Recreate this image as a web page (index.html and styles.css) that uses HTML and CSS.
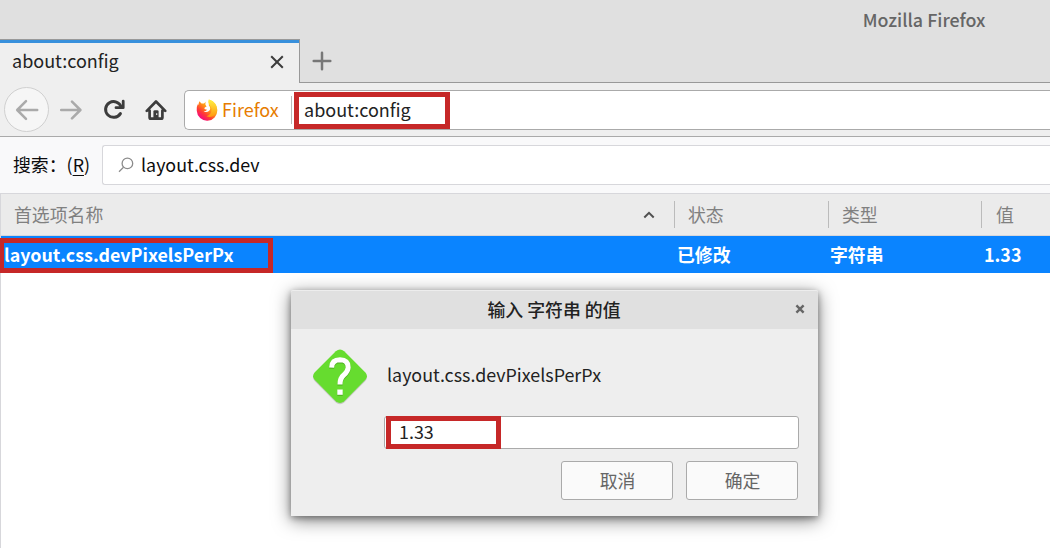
FILE: index.html
```html
<!DOCTYPE html>
<html lang="zh-CN">
<head>
<meta charset="utf-8">
<title>Mozilla Firefox</title>
<link rel="stylesheet" href="styles.css">
</head>
<body>
<div class="window">
  <header class="titlebar">Mozilla Firefox</header>
  <div class="tabstrip">
    <div class="tab">
      <span>about:config</span>
      <svg class="tab-close" width="14" height="14" viewBox="0 0 14 14"><path d="M1.2 1.2 12.8 12.8M12.8 1.2 1.2 12.8"/></svg>
    </div>
    <div class="tab-rest">
      <svg class="new-tab" width="20" height="20" viewBox="0 0 20 20"><path d="M10 1.7V18.3M1.7 10H18.3"/></svg>
    </div>
  </div>
  <nav class="toolbar">
    <span class="back"><svg class="arrow" width="24" height="22" viewBox="0 0 24 22"><path d="M22.2 11H2.5M11 2.2 2.2 11 11 19.8"/></svg></span>
    <svg class="arrow forward" width="22" height="22" viewBox="0 0 22 22"><path d="M1.2 11H20M12 2.6 20.4 11 12 19.4"/></svg>
    <svg class="reload" width="22" height="22" viewBox="0 0 22 22"><path class="ring" d="M18.2 8A8 7.9 0 1 0 17.4 14.6"/><path class="head" d="M20.2 2.2V8.7H13"/></svg>
    <svg class="home" width="22" height="22" viewBox="0 0 22 22"><path class="line" d="M1.8 11.9 11 2.5 20.2 11.9M4.6 11.5V18.4Q4.6 19.6 5.8 19.6H16.2Q17.4 19.6 17.4 18.4V11.5"/><path class="door" d="M8.4 20V12.6Q8.4 11.2 9.8 11.2H12.2Q13.6 11.2 13.6 12.6V20Z"/><path class="knob" d="M11.7 14.2V16"/></svg>
    <div class="urlbar">
      <svg class="fox" width="22" height="22" viewBox="0 0 22 22">
        <defs>
          <linearGradient id="body" x1=".85" y1=".1" x2=".2" y2=".95"><stop offset="0" stop-color="#ffe226"/><stop offset=".4" stop-color="#ff9a16"/><stop offset=".7" stop-color="#ff3b35"/><stop offset="1" stop-color="#f5008c"/></linearGradient>
          <linearGradient id="tail" x1="0" y1="0" x2="0" y2="1"><stop offset="0" stop-color="#fff044"/><stop offset="1" stop-color="#ff980e"/></linearGradient>
        </defs>
        <path fill="url(#body)" d="M3.3 2.2 5.5 4.6 8 4.4 9.8 2.8V5.2L12 7.2 14 3 12.8.6Q17 1.5 19 4.5 21.4 7.2 21.3 11A10.2 10.2 0 0 1 .8 12Q.5 7.8 1.7 5.2L2.3 6Z"/>
        <path fill="#fff" d="M9.8 2.6Q10.8 4.6 12.4 5.8 15.6 9.2 13.2 11.8 10.8 14.1 7.6 12.4 10.3 12.3 11 10.8L8.4 10Q8 8.6 10.6 7.6L9.4 5.8Z"/>
        <path fill="url(#tail)" d="M12.8.6Q17.5 2 19.4 5.1 22.5 11 18.6 16.2 15 19 10.5 17.3 16.3 15.4 15.5 9.4 14.4 6.8 12.6 4.4 11.8 2.5 12.8.6Z"/>
      </svg>
      <span class="brand">Firefox</span>
      <span class="url">about:config</span>
    </div>
  </nav>
  <section class="filter">
    <label class="filter-label">搜索：(<u>R</u>)</label>
    <div class="filter-box">
      <svg class="glass" width="16" height="16" viewBox="0 0 16 16"><circle cx="9.4" cy="6.4" r="5.3"/><path d="M5.5 10.3 1 14.8"/></svg>
      <span class="filter-text">layout.css.dev</span>
    </div>
  </section>
  <main class="table">
    <div class="row head-row">
      <div class="cell">首选项名称<svg class="sort" width="12" height="8" viewBox="0 0 12 8"><path d="M1.3 6.5 6 1.8 10.7 6.5"/></svg></div>
      <div class="cell">状态</div>
      <div class="cell">类型</div>
      <div class="cell">值</div>
    </div>
    <div class="row data-row">
      <div class="item name">layout.css.devPixelsPerPx</div>
      <div class="item">已修改</div>
      <div class="item">字符串</div>
      <div class="item">1.33</div>
    </div>
  </main>
  <div class="dialog">
    <div class="dialog-title">输入 字符串 的值<svg class="dialog-close" width="10" height="10" viewBox="0 0 10 10"><path d="M1.4 1.4 8.6 8.6M8.6 1.4 1.4 8.6"/></svg></div>
    <div class="dialog-body">
      <svg class="question" width="56" height="58" viewBox="0 0 56 58">
        <path class="shade" d="M23.8 4.2Q28 .8 32.2 4.2L53.4 25.8Q56.4 29.4 53.4 33L32.2 54.6Q28 58 23.8 54.6L2.6 33Q-.4 29.4 2.6 25.8Z"/>
        <path class="diamond" d="M23.8 3.2Q28-.2 32.2 3.2L53.4 24.6Q56.4 28.2 53.4 31.8L32.2 53.2Q28 56.6 23.8 53.2L2.6 31.8Q-.4 28.2 2.6 24.6Z"/>
        <g class="hook-shade"><path class="hook" d="M19.6 20.6Q19.8 12.9 28 12.8 36.2 13 36.2 20.4 36 24.4 32 27.8 28 31 28 37.4"/><path class="dot" d="M25.3 42.5H30.7V47.8H25.3Z"/></g>
        <path class="hook" d="M19.6 19.6Q19.8 11.9 28 11.8 36.2 12 36.2 19.4 36 23.4 32 26.8 28 30 28 36.4"/><path class="dot" d="M25.3 41.5H30.7V46.8H25.3Z"/>
      </svg>
      <div class="prompt">layout.css.devPixelsPerPx</div>
      <div class="value"><span class="value-text">1.33</span></div>
      <div class="buttons"><button class="button">取消</button><button class="button">确定</button></div>
    </div>
  </div>
</div>
</body>
</html>
```

FILE: styles.css
```css
* { box-sizing: border-box; }
body { margin: 0; font: 17.87px/26px "Noto Sans CJK SC", "Noto Sans", sans-serif; color: #222; }
svg { display: block; flex: none; fill: none; }
.window { position: relative; width: 1050px; height: 548px; overflow: hidden; background: #fff; display: flex; flex-direction: column; }
.titlebar { height: 39px; flex: none; background: #e0e0e0; padding: 6px 64.5px 0 0; text-align: right; font-weight: 500; color: #666; }
.tabstrip { height: 44px; flex: none; display: flex; background: #e0e0e0; font-size: 18px; }
.tab { width: 300px; border-top: 1px solid #999; border-right: 1px solid #999; background: #efefef; box-shadow: inset 0 3px #3890dc; display: flex; justify-content: space-between; padding: 7px 15.5px 0 12px; }
.tab-close { margin-top: 7.5px; stroke: #3c3c3c; stroke-width: 2; }
.tab-rest { flex: 1; border-bottom: 1px solid #999; padding: 11.5px 0 0 11.5px; }
.new-tab { stroke: #777; stroke-width: 2.5; stroke-linecap: round; }
.toolbar { height: 54px; flex: none; background: #efefef; border-bottom: 1px solid #aaa; display: flex; align-items: center; padding-left: 4px; font-size: 18px; }
.back { width: 45px; height: 45px; border: 1px solid #d0d0d0; border-radius: 50%; background: #f6f6f6; display: grid; place-items: center; }
.arrow { stroke: #aaa; stroke-width: 2.5; stroke-linecap: round; stroke-linejoin: round; }
.forward { margin-left: 11px; }
.reload { margin-left: 21px; }
.ring { stroke: #3c3c3c; stroke-width: 3; stroke-linecap: round; }
.head { stroke: #3c3c3c; stroke-width: 2.8; stroke-linejoin: round; stroke-linecap: round; }
.home { margin-left: 20px; }
.line { stroke: #3c3c3c; stroke-width: 2.7; stroke-linecap: round; stroke-linejoin: round; }
.door { fill: #3c3c3c; }
.knob { stroke: #eee; stroke-width: 1.1; }
.urlbar { flex: 1; height: 40px; margin-left: 17px; border: 1px solid #aaa; border-right: 0; border-radius: 5px 0 0 5px; background: #fff; display: flex; align-items: center; padding-left: 11px; }
.brand { color: #e67c00; width: 70px; height: 28px; line-height: 27px; margin-left: 4px; border-right: 1px solid #bbb; margin-right: 2px; }
.url { width: 156px; height: 37px; border: 5px solid #c62828; line-height: 25px; padding-left: 5px; position: relative; top: 1px; }
.filter { height: 56px; flex: none; background: #f9f9fa; display: flex; padding: 8px 0 0 13px; color: #0c0c0d; }
.filter-label { width: 89px; padding-top: 6px; white-space: nowrap; }
u { text-decoration-thickness: 1px; text-underline-offset: 3px; }
.filter-box { flex: 1; height: 40px; border: 1px solid #d7d7db; border-right: 0; border-radius: 3px 0 0 3px; background: #fff; display: flex; align-items: center; padding-left: 15px; gap: 7px; }
.filter-text { padding-bottom: 2px; }
.glass { stroke: #8b8b8b; stroke-width: 1.3; }
.table { border-left: 1px solid #d7d7db; flex: 1; }
.row { display: grid; grid-template-columns: 673px 154px 153px 1fr; }
.head-row { height: 43px; background: #ebebeb; border-top: 1px solid #d7d7db; border-bottom: 1px solid #d7d7db; padding-top: 7px; color: #808080; }
.cell { height: 27px; border-left: 1px solid #bbb; padding-left: 13px; line-height: 27px; display: flex; align-items: center; justify-content: space-between; }
.cell:first-child { border-left: 0; padding: 0 19.5px 0 13px; }
.cell:last-child { padding-left: 14px; }
.sort { stroke: #505050; stroke-width: 2; }
.data-row { height: 37px; background: #0a84ff; color: #fff; font-weight: 700; }
.item { padding: 5px 0 0 3px; }
.item:nth-child(3) { padding-left: 2px; }
.name { width: 273px; height: 35px; margin: 2px 0 0 -1px; padding: 0; border: 5px solid #c62828; border-left-width: 4px; line-height: 23px; }
.dialog { position: absolute; left: 291px; top: 290px; width: 527px; height: 226px; background: #eee; box-shadow: 0 4px 18px rgba(0,0,0,.5), 0 2px 6px rgba(0,0,0,.35); border-radius: 2px 2px 0 0; }
.dialog-title { height: 39px; background: #e0e0e0; border-top: 1px solid #ededed; border-radius: 2px 2px 0 0; text-align: center; font-weight: 500; padding: 5px 1px 0 0; position: relative; }
.dialog-close { position: absolute; right: 13px; top: 13px; stroke: #666; stroke-width: 2.4; }
.dialog-body { display: grid; grid-template-columns: 71px 1fr; padding: 19px 19px 0 22px; }
.question { grid-row: 1 / 4; margin-left: -1px; }
.shade { fill: #c5c9c2; }
.diamond { fill: #66dc2f; }
.hook { stroke: #fff; stroke-width: 5; }
.dot { fill: #fff; }
.hook-shade .hook { stroke: #4fac24; }
.hook-shade .dot { fill: #4fac24; }
.prompt { height: 68px; padding: 13px 0 0 3px; }
.value { height: 33px; border: 1px solid #aaa; border-radius: 3px; background: #fff; }
.value-text { display: block; width: 115px; height: 33px; margin: -1px 0 0 1px; border: 5px solid #c62828; line-height: 21px; padding-left: 8px; }
.buttons { display: flex; justify-content: flex-end; gap: 13px; padding: 12px 1px 0 0; }
.button { width: 112px; height: 39px; padding: 0 0 2px 1px; border: 1px solid #aaa; border-radius: 3px; background: #fafafa; color: #666; font: inherit; }
```
